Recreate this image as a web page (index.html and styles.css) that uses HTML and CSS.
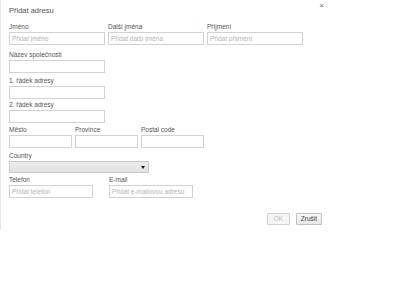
FILE: index.html
```html
<!DOCTYPE html>
<html lang="cs">
<head>
<meta charset="utf-8">
<title>Přidat adresu</title>
<link rel="stylesheet" href="styles.css">
</head>
<body>
<div class="dialog">
  <div class="header">
    <h1 class="title">Přidat adresu</h1>
    <span class="close">×</span>
  </div>
  <div class="form">
    <div class="row r1">
      <label class="field w95"><span class="lbl">Jméno</span><input class="inp" placeholder="Přidat jméno"></label>
      <label class="field w95"><span class="lbl">Další jména</span><input class="inp" placeholder="Přidat další jména"></label>
      <label class="field w95"><span class="lbl">Příjmení</span><input class="inp" placeholder="Přidat příjmení"></label>
    </div>
    <div class="row r2">
      <label class="field w95"><span class="lbl">Název společnosti</span><input class="inp"></label>
    </div>
    <div class="row r3">
      <label class="field w95"><span class="lbl">1. řádek adresy</span><input class="inp"></label>
    </div>
    <div class="row r4">
      <label class="field w95"><span class="lbl">2. řádek adresy</span><input class="inp"></label>
    </div>
    <div class="row r5">
      <label class="field w62"><span class="lbl">Město</span><input class="inp"></label>
      <label class="field w62"><span class="lbl">Province</span><input class="inp"></label>
      <label class="field w62"><span class="lbl">Postal code</span><input class="inp"></label>
    </div>
    <div class="row r6">
      <label class="field w139"><span class="lbl">Country</span><span class="select"><span class="arrow"></span></span></label>
    </div>
    <div class="row r7 wide-gap">
      <label class="field w83"><span class="lbl">Telefon</span><input class="inp" placeholder="Přidat telefon"></label>
      <label class="field w83"><span class="lbl">E-mail</span><input class="inp" placeholder="Přidat e-mailovou adresu"></label>
    </div>
  </div>
  <div class="buttons">
    <button class="btn btn-ok" disabled>OK</button>
    <button class="btn">Zrušit</button>
  </div>
</div>
</body>
</html>
```

FILE: styles.css
```css
html, body {
  margin: 0;
  padding: 0;
  background: #fff;
}
body {
  font-family: "Liberation Sans", Arial, sans-serif;
  font-size: 6.5px;
  color: #444;
}
.dialog {
  width: 313px;
  height: 230px;
  padding-left: 8px;
  border-left: 1px solid #e6e6e6;
  display: flex;
  flex-direction: column;
}
.header {
  display: flex;
  justify-content: space-between;
  align-items: flex-start;
  height: 21px;
}
.title {
  margin: 6px 0 0 0;
  font-size: 7.5px;
  font-weight: normal;
  line-height: 9px;
  color: #555;
}
.close {
  margin-top: 2px;
  margin-right: -2px;
  font-size: 8px;
  line-height: 8px;
  color: #666;
}
.form {
  display: flex;
  flex-direction: column;
}
.row {
  display: flex;
  gap: 3px;
}
.wide-gap { gap: 16px; }
.r2 { margin-top: 4px; }
.r3 { margin-top: 2px; }
.r4 { margin-top: 0; }
.r5 { margin-top: 1px; }
.r6 { margin-top: 2px; }
.r7 { margin-top: 1px; }
.field {
  display: flex;
  flex-direction: column;
}
.w95 { width: 96px; }
.w62 { width: 63px; }
.w139 { width: 140px; }
.w83 { width: 84px; }
.lbl {
  height: 11px;
  line-height: 11px;
  color: #555;
  white-space: nowrap;
}
.inp {
  box-sizing: border-box;
  width: 100%;
  height: 13px;
  margin: 0;
  padding: 0 2px;
  border: 1px solid #d2d2d2;
  font-family: "Liberation Sans", Arial, sans-serif;
  font-size: 6.5px;
  color: #444;
  outline: none;
}
.inp::placeholder { color: #b4b4b4; }
.select {
  box-sizing: border-box;
  position: relative;
  height: 12px;
  border: 1px solid #c8c8c8;
  background: linear-gradient(#ececec, #e2e2e2);
}
.arrow {
  position: absolute;
  right: 3px;
  top: 4px;
  width: 0;
  height: 0;
  border-left: 2px solid transparent;
  border-right: 2px solid transparent;
  border-top: 3px solid #111;
}
.buttons {
  display: flex;
  justify-content: flex-end;
  gap: 6px;
  margin-top: 15px;
}
.btn {
  box-sizing: border-box;
  height: 12px;
  min-width: 23px;
  padding: 0 4px;
  border: 1px solid #c0c0c0;
  border-radius: 1px;
  background: linear-gradient(#f8f8f8, #e8e8e8);
  font-family: "Liberation Sans", Arial, sans-serif;
  font-size: 6.5px;
  line-height: 10px;
  color: #444;
}
.btn-ok {
  width: 23px;
  background: #f5f5f5;
  border-color: #d0d0d0;
  color: #bbb;
}
```
